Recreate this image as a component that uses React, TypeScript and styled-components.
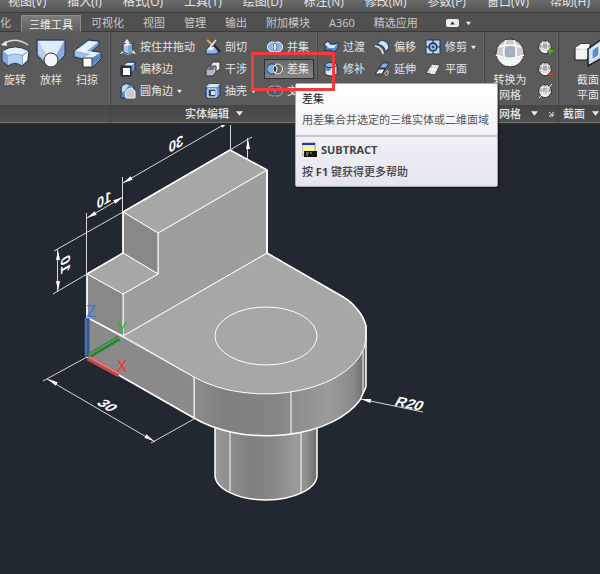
import React from "react";
import styled, { createGlobalStyle } from "styled-components";

const GlobalStyle = createGlobalStyle`
  *, *::before, *::after { box-sizing: border-box; }
  body {
    margin: 0;
    background: #212830;
    font-family: "Open Sans", "Noto Sans CJK SC", sans-serif;
    font-size: 11px;
    line-height: 16px;
    color: #e6e6e6;
  }
  button { font: inherit; color: inherit; background: none; border: 0; padding: 0; }
`;

const Window = styled.div`
  min-height: 100vh;
  overflow: hidden;
  background: #212830;
`;

const MenuBar = styled.nav`
  display: flex;
  align-items: flex-end;
  gap: 21px;
  height: 13px;
  padding: 0 8px 2px;
  background: linear-gradient(#6a6a6a, #555);
  border-bottom: 1px solid #3a3a3a;
`;

const MenuItem = styled.button`
  flex: none;
  white-space: nowrap;
  height: 16px;
  font-size: 12px;
`;

const TabBar = styled.div`
  display: flex;
  align-items: stretch;
  height: 19px;
  padding-top: 2px;
  background: #505050;
  border-bottom: 1px solid #3a3a3a;
  color: #c9c9c9;
`;

const Tab = styled.button<{ $active?: boolean; $first?: boolean }>`
  flex: none;
  white-space: nowrap;
  line-height: 16px;
  height: ${(p) => (p.$active ? "17px" : "16px")};
  padding: ${(p) => (p.$first ? "0 10px 0 0" : p.$active ? "0 7px" : "0 10px 0 9px")};
  ${(p) =>
    p.$active &&
    `color: #f2f2f2;
     background: linear-gradient(#7c7c7c, #5e5e5e);
     border: 1px solid #8c8c8c;
     border-bottom: 0;
     line-height: 15px;
     margin-right: 1px;`}
`;

const RibbonToggle = styled.button`
  display: flex;
  align-items: center;
  gap: 7px;
  margin-left: 18px;
`;

const Ribbon = styled.div`
  display: flex;
  position: relative;
  z-index: 1;
  background: #5b5b5b;
  border-bottom: 2px solid #2c2d2f;
`;

const Panel = styled.section<{ $grow?: boolean }>`
  flex: ${(p) => (p.$grow ? "1 0 auto" : "none")};
  display: flex;
  flex-direction: column;
  border-right: 1px solid #444;
  box-shadow: inset -1px 0 0 #666;
`;

const PanelBody = styled.div<{ $pad?: number; $end?: number; $gap?: number }>`
  display: flex;
  gap: ${(p) => p.$gap ?? 0}px;
  height: 73px;
  padding-top: 4px;
  padding-left: ${(p) => p.$pad ?? 0}px;
  padding-right: ${(p) => p.$end ?? 0}px;
`;

const PanelTitle = styled.h2<{ $align?: string; $pad?: number }>`
  display: flex;
  align-items: center;
  justify-content: ${(p) => p.$align ?? "center"};
  gap: 7px;
  height: 18px;
  margin: 0;
  padding: 0 ${(p) => p.$pad ?? 0}px;
  font-size: 11px;
  font-weight: 500;
  background: linear-gradient(#464646, #505050);
  border-bottom: 1px solid #757577;
`;

const Column = styled.div<{ $width: number }>`
  display: flex;
  flex-direction: column;
  align-items: flex-start;
  width: ${(p) => p.$width}px;
`;

const BigButton = styled.button<{ $width: number }>`
  display: flex;
  flex-direction: column;
  align-items: center;
  width: ${(p) => p.$width}px;
  padding-top: 2px;
  line-height: 15px;
  white-space: nowrap;

  svg { flex: none; margin-bottom: 4px; }
`;

const SmallButton = styled.button<{ $active?: boolean }>`
  display: flex;
  align-items: center;
  gap: 4px;
  height: 20px;
  margin: 1px 0;
  padding: 0 4px 0 2px;
  border: 1px solid ${(p) => (p.$active ? "#2f2f2f" : "transparent")};
  background: ${(p) => (p.$active ? "linear-gradient(#6a6a6a, #858585)" : "none")};
  white-space: nowrap;
`;

const Anchor = styled.div`
  position: relative;
`;

const Highlight = styled.div`
  position: absolute;
  z-index: 3;
  left: -13px;
  top: -6px;
  width: 84px;
  height: 39px;
  border: 3px solid #f33a3c;
  pointer-events: none;
`;

const Tooltip = styled.div`
  position: absolute;
  z-index: 2;
  left: 31px;
  top: 25px;
  border: 1px solid #a9a9ae;
  border-radius: 2px;
  background: linear-gradient(#fff, #e3e4ef);
  box-shadow: 1px 1px 2px #0008;
  color: #555;
  white-space: nowrap;
`;

const TipSection = styled.div<{ $lower?: boolean }>`
  display: flex;
  flex-direction: column;
  gap: ${(p) => (p.$lower ? 6 : 5)}px;
  padding: ${(p) => (p.$lower ? "5px 8px 6px 6px" : "7px 8px 7px 6px")};
  ${(p) => p.$lower && "border-top: 2px solid #c6c6cb; color: #444; font-weight: 500;"}
`;

const TipTitle = styled.strong`
  font-weight: 400;
  color: #222;
`;

const Command = styled.span`
  display: flex;
  align-items: center;
  gap: 4px;
  font-weight: 700;
`;

const Drawing = styled.svg`
  display: block;
  width: 100%;
`;

const Arrow = ({ size = 5 }: { size?: number }) => (
  <svg width={size} height={size} viewBox="0 0 6 6" aria-hidden="true">
    <path d="M0 1h6L3 5z" fill="#ececec" />
  </svg>
);

const Icon16 = ({ children }: { children: React.ReactNode }) => (
  <svg width="16" height="16" viewBox="0 0 16 16" aria-hidden="true" strokeLinejoin="round">
    {children}
  </svg>
);

const Icon30 = ({ children }: { children: React.ReactNode }) => (
  <svg width="30" height="30" viewBox="0 0 30 30" aria-hidden="true" strokeLinejoin="round">
    {children}
  </svg>
);

const INK = "#24364f";

const icons = {
  revolve: (
    <Icon30>
      <path d="M3 6Q15-2 28 7" fill="none" stroke="#d8d8d8" strokeWidth="1.500" />
      <path d="M1 7l5-4 1 5z" fill="#f4f4f4" />
      <path d="M2 13Q15 5 29 13L28 23L22 28Q15 23 8 28L2 23z" fill="#7fa6da" stroke={INK} />
      <path d="M3 13Q15 6 28 13L22 17Q15 14 8 17z" fill="#e6f0fb" />
      <path d="M8 18Q15 15 22 18V27Q15 22 8 27z" fill="#b4cff1" />
      <path d="M23 18l5-4-1 8-4 4z" fill="#fff" />
    </Icon30>
  ),
  loft: (
    <Icon30>
      <path d="M1 2H29V17L20 27H10L1 17z" fill="#87aadb" stroke={INK} />
      <path d="M2 3H28L20 17H10z" fill="#e0ecf9" />
      <path d="M2 3L10 17L9 23L2 16z" fill="#b8d0ef" />
      <circle cx="15" cy="22" r="7" fill="#f5f5f5" stroke="#333" />
    </Icon30>
  ),
  sweep: (
    <Icon30>
      <path d="M2 13L16 2L27 3V7L20 13L29 14V21L21 29H11V21L2 19z" fill="#7fa6da" stroke={INK} />
      <path d="M3 13L17 3L26 4L15 13L28 15L20 20H11L18 16z" fill="#e6f0fb" />
      <path d="M3 14L17 16L11 20L3 18z" fill="#9fc0ea" />
      <path d="M20 20l8-5v6l-8 7z" fill="#5d87c4" />
      <rect x="11" y="20" width="9" height="9" fill="#fff" stroke="#333" />
    </Icon30>
  ),
  mesh: (
    <Icon30>
      <circle cx="15" cy="15" r="14" fill="#cdcdcd" stroke="#333" />
      <path d="M2 19Q15 24 28 19Q24 28 15 28Q6 28 2 19z" fill="#f7f7f7" />
      <path d="M10 9Q15 7 20 9L21 19Q15 21 9 19z" fill="#a5b1c0" />
      <path d="M4 9Q15 5 26 9M1 17Q15 24 29 17M11 2Q7 14 10 21M19 2Q23 14 20 21" fill="none" stroke="#fff" strokeWidth="1.500" />
    </Icon30>
  ),
  section: (
    <Icon30>
      <path d="M2 10L8 6H17V15L14 22H2z" fill="#ddd" stroke="#222" />
      <path d="M2 10L8 6H17L14 11z" fill="#fff" />
      <rect x="3" y="12" width="11" height="9" fill="#f3f3f3" />
      <path d="M15 11L29 1V20L15 28z" fill="#cfdced" stroke="#222" strokeWidth="1.500" />
      <path d="M19 12L26 7V17L19 22z" fill="#5c8fd1" stroke="#fff" />
    </Icon30>
  ),
  pressPull: (
    <Icon16>
      <path d="M0 15L3 11H13L16 15L12 14L8 16L3 14z" fill="#eee" />
      <path d="M3 6L7 4L12 5V13L8 15L3 13z" fill="#a9c7ec" stroke={INK} />
      <path d="M3 6L7 4L12 5L8 7z" fill="#e6f0fb" />
      <path d="M8 7L12 5V13L8 15z" fill="#7ea6da" />
      <path d="M7 7V2" stroke="#fff" /><path d="M4 4L7 0L10 4z" fill="#eee" />
    </Icon16>
  ),
  offsetEdge: (
    <Icon16>
      <path d="M5 5L8 1H15V9L11 12V5z" fill="#6f9cd8" stroke={INK} />
      <path d="M4 5L7 2H14L11 5z" fill="#d8e8fa" />
      <rect x="1" y="5" width="10" height="10" fill="#333" stroke="#1d2a3c" />
      <rect x="3" y="7" width="7" height="7" fill="#fff" />
    </Icon16>
  ),
  fillet: (
    <Icon16>
      <path d="M1 4L4 1H11L14 4V8L7 15H1z" fill="#5485c5" stroke={INK} />
      <path d="M2 4Q5 0 9 2L5 8L2 9z" fill="#c3daf5" />
      <path d="M5 10Q7 5 12 5L15 8V15H6z" fill="#c8ccd1" stroke="#f5f5f5" />
    </Icon16>
  ),
  slice: (
    <Icon16>
      <path d="M1 11L4 7H10L14 11L12 15H1z" fill="#8fb6e6" stroke={INK} />
      <path d="M2 11L5 8H9L8 11z" fill="#eaf3fd" />
      <path d="M2 1L9 7" stroke="#e7a94a" strokeWidth="2" />
      <path d="M9 6L15 13" stroke="#222" strokeWidth="2" />
      <path d="M11 1L5 8" stroke="#f3f3f3" strokeWidth="1.500" />
    </Icon16>
  ),
  interfere: (
    <Icon16>
      <path d="M5 5L8 1H15V8L11 11H5z" fill="#ececec" stroke="#333" />
      <path d="M1 9L4 5H11V11L8 15H1z" fill="#b4b8be" stroke="#333" />
      <path d="M2 9L5 6H10L8 9z" fill="#5f6f84" />
    </Icon16>
  ),
  shell: (
    <Icon16>
      <path d="M1 4L4 1H15V12L12 15H1z" fill="#6796d3" stroke={INK} />
      <path d="M1 4L4 1H15L12 4z" fill="#d6e6f9" />
      <rect x="3" y="6" width="8" height="8" fill="#24466f" stroke="#fff" />
      <path d="M6 12V8H10V12z" fill="#cfe1f7" />
    </Icon16>
  ),
  union: (
    <Icon16>
      <ellipse cx="5.500" cy="8" rx="5" ry="5" fill="#8db4e6" stroke="#fff" />
      <ellipse cx="10.500" cy="8" rx="5" ry="5" fill="#8db4e6" stroke="#fff" />
      <ellipse cx="8" cy="8" rx="2" ry="4" fill="#eaf3fd" stroke="#3a64a0" />
    </Icon16>
  ),
  subtract: (
    <Icon16>
      <circle cx="10.500" cy="8" r="5" fill="#6b6b6b" stroke="#ececec" />
      <path d="M8 4A5 5 0 1 0 8 12Q4 8 8 4z" fill="#7fb0ec" stroke="#1d3660" />
      <path d="M8 4Q4 8 8 12Q12 8 8 4z" fill="#333" stroke="#fff" />
    </Icon16>
  ),
  intersect: (
    <Icon16>
      <circle cx="5.500" cy="8" r="5" fill="none" stroke="#a8a8a8" />
      <circle cx="10.500" cy="8" r="5" fill="none" stroke="#a8a8a8" />
      <ellipse cx="8" cy="8" rx="2.500" ry="4" fill="#4b7dc2" stroke="#24364f" />
    </Icon16>
  ),
  blend: (
    <Icon16>
      <path d="M1 5L5 2L8 5H12L15 3V9L11 13L8 11H4L1 12L3 9z" fill="#5f91d1" stroke={INK} />
      <path d="M2 5L5 3L7 6H12L14 5L11 9H6z" fill="#d9e9fb" />
    </Icon16>
  ),
  patch: (
    <Icon16>
      <path d="M2 4V13Q8 17 14 13V4z" fill="#e9e9e9" stroke="#333" />
      <path d="M2 4V9Q8 12 8 6L14 4z" fill="#4f82c8" />
      <ellipse cx="8" cy="4" rx="6" ry="2.500" fill="#8fb6e6" stroke={INK} />
    </Icon16>
  ),
  offset: (
    <Icon16>
      <path d="M3 5L7 1Q15 2 15 9L11 13Q11 6 3 5z" fill="#a9cbf2" stroke={INK} />
      <path d="M5 5L7 2Q13 3 14 9L12 11Q11 6 5 5z" fill="#cfe3fa" />
      <path d="M1 7Q8 8 9 15" fill="none" stroke="#f0f0f0" strokeWidth="1.500" />
    </Icon16>
  ),
  extend: (
    <Icon16>
      <path d="M5 7L9 2H15L12 7z" fill="#85afe5" stroke={INK} />
      <path d="M1 13L5 8H11L8 13z" fill="#f5f5f5" stroke="#222" />
      <path d="M10 13l4-4M14 10v3M11 14h3" stroke="#ccc" />
    </Icon16>
  ),
  trim: (
    <Icon16>
      <rect x="1" y="1" width="14" height="14" fill="#bcd5f4" stroke={INK} />
      <path d="M8 1V15M1 8H15" stroke="#1b2a40" strokeDasharray="3 1" />
      <circle cx="8" cy="8" r="4" fill="#83abe0" stroke="#1b2a40" strokeWidth="1.500" />
      <circle cx="8" cy="8" r="1" fill="#1b2a40" />
    </Icon16>
  ),
  planar: (
    <Icon16>
      <path d="M1 12L7 3L15 4L10 14z" fill="#d8d8d8" stroke="#444" />
      <path d="M4 8L12 9M9 4L6 13M12 4L8 13" stroke="#fff" />
    </Icon16>
  ),
};

const MeshSmall = ({ mode }: { mode: "more" | "less" | "none" }) => (
  <Icon16>
    <circle cx="8" cy="8" r="6.500" fill="#a6a6a6" stroke="#333" />
    <path d="M3 10Q8 13 13 10Q11 14 8 14Q5 14 3 10z" fill="#fff" />
    <path d="M3 5Q8 3 13 5M2 9Q8 12 14 9M6 2Q4 8 6 12M10 2Q12 8 10 12" fill="none" stroke="#f3f3f3" />
    {mode === "more" && <path d="M13 9V15M10 12H16" stroke="#55ad1e" strokeWidth="2" />}
    {mode === "less" && <path d="M11 13H16" stroke="#e0331f" strokeWidth="2" />}
    {mode === "none" && <path d="M2 15L15 1" stroke="#f0f0f0" />}
  </Icon16>
);

type ToolProps = { icon: React.ReactNode; label: string; menu?: boolean; active?: boolean };

const Tool = ({ icon, label, menu, active }: ToolProps) => (
  <SmallButton $active={active}>
    {icon}
    <span>{label}</span>
    {menu && <Arrow />}
  </SmallButton>
);

const SubtractTip = () => (
  <Tooltip role="tooltip" id="subtract-tip">
    <TipSection>
      <TipTitle>差集</TipTitle>
      <span>用差集合并选定的三维实体或二维面域</span>
    </TipSection>
    <TipSection $lower>
      <Command>
        <svg width="15" height="16" viewBox="0 0 15 16" aria-hidden="true">
          <rect width="13" height="12" y="1" fill="#f8f4a0" stroke="#999" />
          <rect y="1" width="13" height="2" fill="#1c35cc" />
          <rect x="2" y="9" width="13" height="6" fill="#151515" />
          <path d="M4 11h3M8 11h2M4 13h2" stroke="#aaa" />
        </svg>
        SUBTRACT
      </Command>
      <span>按 <b>F1</b> 键获得更多帮助</span>
    </TipSection>
  </Tooltip>
);

const menus = ["视图(V)", "插入(I)", "格式(O)", "工具(T)", "绘图(D)", "标注(N)", "修改(M)", "参数(P)", "窗口(W)", "帮助(H)"];
const tabs = ["可视化", "视图", "管理", "输出", "附加模块", "A360", "精选应用"];

const DimensionArrow = ({ x, y, angle }: { x: number; y: number; angle: number }) => (
  <path d="M0 0L10-2V2z" fill="#fff" transform={`translate(${x} ${y}) rotate(${angle})`} />
);

const Model = () => (
  <Drawing viewBox="0 125 600 449" role="img" aria-label="三维实体模型">
    <defs>
      <linearGradient id="rim" gradientUnits="userSpaceOnUse" x1="193" x2="367" y1="0" y2="0">
        <stop offset="0" stopColor="#8c8c8c" />
        <stop offset="0.2" stopColor="#7f7f7f" />
        <stop offset="0.5" stopColor="#868686" />
        <stop offset="0.56" stopColor="#8b8b8b" />
        <stop offset="0.78" stopColor="#9b9d9a" />
        <stop offset="0.92" stopColor="#8a8a8a" />
        <stop offset="1" stopColor="#666" />
      </linearGradient>
      <linearGradient id="post" gradientUnits="userSpaceOnUse" x1="215" x2="317" y1="0" y2="0">
        <stop offset="0" stopColor="#999" />
        <stop offset="0.15" stopColor="#8d8d8d" />
        <stop offset="0.35" stopColor="#808080" />
        <stop offset="0.55" stopColor="#858585" />
        <stop offset="0.8" stopColor="#9b9d9a" />
        <stop offset="0.9" stopColor="#8e8e8e" />
        <stop offset="1" stopColor="#6c6c6c" />
      </linearGradient>
    </defs>

    <g stroke="#fff" strokeWidth="1.500" strokeLinejoin="round">
      <path d="M215 400V475A51 25 0 0 0 317 475V400z" fill="url(#post)" />
      <path d="M230 430V491M301 430V493" fill="none" strokeWidth="1" />
      <path d="M194 377V418A101 58 0 0 0 366 387V326z" fill="url(#rim)" stroke="none" />
      <path d="M194 377V418" strokeWidth="1" />
      <path d="M87 317L194 377V418L87 357z" fill="#8a8a8a" strokeWidth="1" />
      <path d="M123 336L267 253L338 294Q350 300 357 309Q364 317 366 326V340A101 58 0 0 1 194 377z" fill="#a6a8a5" strokeWidth="1" />
      <path d="M267 253L338 294Q350 300 357 309Q364 317 366 326V387" fill="none" strokeWidth="1.500" />
      <path d="M87 357L194 418A101 58 0 0 0 360 400L366 387" fill="none" strokeWidth="1.500" />
      <path d="M87 317L123 336" fill="none" strokeWidth="2" />
      <path d="M291 392V434M363 351V394" fill="none" strokeWidth="1" />
      <ellipse cx="266" cy="336" rx="51" ry="29" fill="none" strokeWidth="1" />
      <path d="M158 233L267 170V253L123 336V294L158 274z" fill="#9d9f9e" strokeWidth="1" />
      <path d="M123 212L230 150L267 170L158 233z" fill="#a6a8a5" strokeWidth="1" />
      <path d="M123 212L158 233V274L123 253z" fill="#888" strokeWidth="1" />
      <path d="M87 274L123 253L158 274L123 294z" fill="#a6a8a5" strokeWidth="1" />
      <path d="M87 274L123 294V336L87 317z" fill="#888" strokeWidth="1" />
      <path d="M87 317V274L123 253V212L230 150L267 170V253" fill="none" />
      <path d="M267 170V253" strokeWidth="2" />
    </g>

    <g stroke="#d5d7d9" fill="none">
      <path d="M122.500 177V212M230.500 120V150M123 183L230 121" />
      <path d="M86.500 213V274M87 218L123 197" />
      <path d="M54 251L123 212M53 294L87 274M57.500 249V292" />
      <path d="M230 150L252 137M247.500 138V160" />
      <path d="M87 357L43 381M194 419L151 443M47 379L155 442" />
      <path d="M361 399L423 412" />
    </g>
    <DimensionArrow x={123} y={183} angle={-30} />
    <DimensionArrow x={230} y={121} angle={150} />
    <DimensionArrow x={87} y={218} angle={-30} />
    <DimensionArrow x={123} y={197} angle={150} />
    <DimensionArrow x={58} y={250} angle={90} />
    <DimensionArrow x={58} y={291} angle={-90} />
    <DimensionArrow x={248} y={139} angle={90} />
    <DimensionArrow x={48} y={379} angle={30} />
    <DimensionArrow x={154} y={441} angle={-150} />
    <DimensionArrow x={361} y={399} angle={12} />

    <g fill="#fff" fontFamily="Liberation Sans, sans-serif" fontSize="15" fontWeight="700" textAnchor="middle">
      <text transform="matrix(-0.87 0.5 0 1 176 149)">30</text>
      <text transform="matrix(-0.87 0.5 0 1 104 205)">10</text>
      <text transform="matrix(0 -1 -0.87 0.5 61 267)">10</text>
      <text transform="matrix(0.87 0.5 -0.87 0.5 103 408)">30</text>
      <text transform="matrix(0.98 0.2 -0.5 0.85 407 408)">R20</text>
    </g>

    <g strokeWidth="5" fill="none">
      <path d="M87 318V357" stroke="#35568f" />
      <path d="M89 356L119 338" stroke="#2f7d35" />
      <path d="M88 358L119 375" stroke="#c24a4a" />
    </g>
    <g strokeWidth="1.500" fill="none">
      <path d="M86 318V355" stroke="#5478b5" />
      <path d="M89 355L119 337" stroke="#53a457" />
      <path d="M89 357L120 374" stroke="#e88080" />
    </g>
    <g fontFamily="Open Sans, sans-serif" fontWeight="400" fontSize="17" textAnchor="middle">
      <text x="91" y="317" fill="#2d78f0">Z</text>
      <text x="122" y="334" fill="#24b52c">Y</text>
      <text x="122" y="372" fill="#f03030">X</text>
    </g>
  </Drawing>
);

export default function App() {
  return (
    <Window>
      <GlobalStyle />
      <MenuBar>
        {menus.map((m) => <MenuItem key={m}>{m}</MenuItem>)}
      </MenuBar>
      <TabBar>
        <Tab $first>化</Tab>
        <Tab $active>三维工具</Tab>
        {tabs.map((t) => <Tab key={t}>{t}</Tab>)}
        <RibbonToggle aria-label="最小化功能区">
          <svg width="13" height="8" viewBox="0 0 13 8" aria-hidden="true">
            <rect width="13" height="8" rx="2" fill="#eee" />
            <path d="M4 5.500L6.500 2.500L9 5.500z" fill="#333" />
          </svg>
          <Arrow />
        </RibbonToggle>
      </TabBar>
      <Ribbon>
        <Panel>
          <PanelBody $gap={6} $end={8}>
            <BigButton $width={30}>{icons.revolve}旋转</BigButton>
            <BigButton $width={30}>{icons.loft}放样</BigButton>
            <BigButton $width={30}>{icons.sweep}扫掠</BigButton>
          </PanelBody>
          <PanelTitle />
        </Panel>
        <Panel>
          <PanelBody $pad={6}>
            <Column $width={85}>
              <Tool icon={icons.pressPull} label="按住并拖动" />
              <Tool icon={icons.offsetEdge} label="偏移边" />
              <Tool icon={icons.fillet} label="圆角边" menu />
            </Column>
            <Column $width={62}>
              <Tool icon={icons.slice} label="剖切" />
              <Tool icon={icons.interfere} label="干涉" />
              <Tool icon={icons.shell} label="抽壳" menu />
            </Column>
            <Column $width={53}>
              <Tool icon={icons.union} label="并集" />
              <Anchor>
                <Tool icon={icons.subtract} label="差集" active />
                <Highlight />
                <SubtractTip />
              </Anchor>
              <Tool icon={icons.intersect} label="交集" />
            </Column>
          </PanelBody>
          <PanelTitle>实体编辑 <Arrow size={7} /></PanelTitle>
        </Panel>
        <Panel>
          <PanelBody $pad={2}>
            <Column $width={51}>
              <Tool icon={icons.blend} label="过渡" />
              <Tool icon={icons.patch} label="修补" />
            </Column>
            <Column $width={51}>
              <Tool icon={icons.offset} label="偏移" />
              <Tool icon={icons.extend} label="延伸" />
            </Column>
            <Column $width={62}>
              <Tool icon={icons.trim} label="修剪" menu />
              <Tool icon={icons.planar} label="平面" />
            </Column>
          </PanelBody>
          <PanelTitle />
        </Panel>
        <Panel>
          <PanelBody $pad={7} $gap={6}>
            <BigButton $width={36}>{icons.mesh}<span>转换为<br />网格</span></BigButton>
            <Column $width={24}>
              <SmallButton aria-label="提高平滑度"><MeshSmall mode="more" /></SmallButton>
              <SmallButton aria-label="降低平滑度"><MeshSmall mode="less" /></SmallButton>
              <SmallButton aria-label="取消平滑"><MeshSmall mode="none" /></SmallButton>
            </Column>
          </PanelBody>
          <PanelTitle $align="space-between" $pad={4}>
            <span />网格 <Arrow size={7} />
            <svg width="6" height="6" viewBox="0 0 6 6" aria-hidden="true">
              <path d="M1 1L5 5M5 1V5H1" stroke="#eee" fill="none" />
            </svg>
          </PanelTitle>
        </Panel>
        <Panel $grow>
          <PanelBody $pad={14}>
            <BigButton $width={30}>{icons.section}<span>截面<br />平面</span></BigButton>
          </PanelBody>
          <PanelTitle $align="flex-start" $pad={4}>截面 <Arrow size={7} /></PanelTitle>
        </Panel>
      </Ribbon>
      <Model />
    </Window>
  );
}
